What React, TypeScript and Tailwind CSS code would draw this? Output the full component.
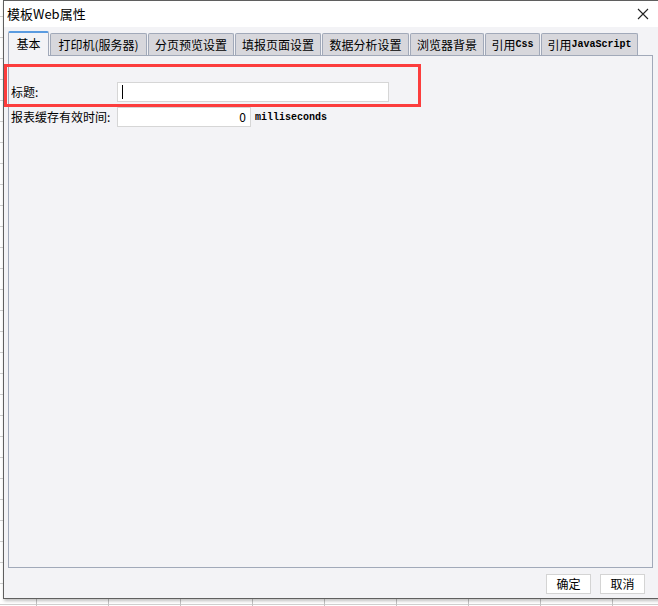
import type { ReactNode } from "react";

const cjk = "font-['Noto_Sans_CJK_SC','Noto_Sans',sans-serif]";
const mono = "font-['Liberation_Mono',monospace] font-bold text-[10px]";

type Tab = { label: ReactNode; w: string; active?: boolean };

const tabs: Tab[] = [
  { label: "基本", w: "w-[41px]", active: true },
  { label: "打印机(服务器)", w: "w-[97px]" },
  { label: "分页预览设置", w: "w-[86px]" },
  { label: "填报页面设置", w: "w-[86px]" },
  { label: "数据分析设置", w: "w-[87px]" },
  { label: "浏览器背景", w: "w-[74px]" },
  {
    label: (
      <>
        引用<span className={mono}>Css</span>
      </>
    ),
    w: "w-[55px]",
  },
  {
    label: (
      <>
        引用<span className={mono}>JavaScript</span>
      </>
    ),
    w: "w-[97px]",
  },
];

function TabButton({ tab }: { tab: Tab }) {
  if (tab.active) {
    return (
      <div
        className={`${tab.w} relative z-10 -mb-px flex h-[25px] items-center justify-center rounded-t-[2px] border border-b-0 border-[#a1a9b9] border-t-2 border-t-[#5a9be0] bg-[#f3f3f6] pb-[1px] text-[12px] text-black`}
      >
        {tab.label}
      </div>
    );
  }
  return (
    <div
      className={`${tab.w} flex h-[22px] items-center justify-center whitespace-nowrap rounded-t-[2px] border border-b-0 border-[#a1a9b9] bg-[#d7d7dc] text-[12px] text-black`}
    >
      {tab.label}
    </div>
  );
}

export default function App() {
  return (
    <div
      className={`${cjk} h-[606px] w-[658px] overflow-hidden bg-white bg-[repeating-linear-gradient(90deg,transparent_0px_36px,#c4c4c4_36px_37px,transparent_37px_72px),repeating-linear-gradient(180deg,transparent_0px_16px,#cfcfcf_16px_17px,transparent_17px_21px)]`}
    >
      <div className="relative ml-[3px] flex h-[599px] w-[660px] flex-col border border-[#5f5f5f] bg-[#f3f3f6] shadow-[1px_2px_3px_rgba(0,0,0,0.25)]">
        {/* title bar */}
        <div className="flex h-[26px] items-center bg-white pl-[3px]">
          <span className="text-[13px] text-black">模板Web属性</span>
          <svg
            className="ml-auto mr-[13px]"
            width="12"
            height="12"
            viewBox="0 0 12 12"
            fill="none"
            stroke="#222"
            strokeWidth="1.1"
          >
            <path d="M1 1 L11 11 M11 1 L1 11" />
          </svg>
        </div>

        {/* tabs */}
        <div className="ml-[4px] mt-[4px] flex items-end gap-px">
          {tabs.map((t, i) => (
            <TabButton key={i} tab={t} />
          ))}
        </div>

        {/* panel */}
        <div className="ml-[4px] flex h-[513px] w-[645px] flex-col gap-[5px] border border-[#a1a9b9] bg-[#f3f3f6] pt-[26px] text-[12px] text-black">
          <div className="flex h-[20px] items-center">
            <span className="w-[108px] pl-[2px]">标题:</span>
            <div className="flex h-[20px] w-[272px] items-center border border-[#d6d6d6] bg-white pl-[4px]">
              <span className="h-[14px] w-px bg-black" />
            </div>
          </div>
          <div className="flex h-[20px] items-center">
            <span className="w-[108px] whitespace-nowrap pl-[2px]">报表缓存有效时间:</span>
            <div className="flex h-[20px] w-[134px] items-center justify-end border border-[#d6d6d6] bg-white pr-[4px] text-[12px]">
              0
            </div>
            <span className={`${mono} ml-[4px]`}>milliseconds</span>
          </div>
        </div>

        {/* footer */}
        <div className="ml-[4px] mt-[6px] flex w-[645px] justify-end gap-[9px] pr-[8px]">
          <button className="h-[20px] w-[45px] border border-[#d4d4d4] bg-white text-[12px] leading-none text-black">
            确定
          </button>
          <button className="h-[20px] w-[45px] border border-[#d4d4d4] bg-white text-[12px] leading-none text-black">
            取消
          </button>
        </div>

        {/* red annotation box */}
        <div className="absolute left-0 top-[63px] h-[43px] w-[417px] border-[3px] border-[#fc3d3d]" />
      </div>
    </div>
  );
}
